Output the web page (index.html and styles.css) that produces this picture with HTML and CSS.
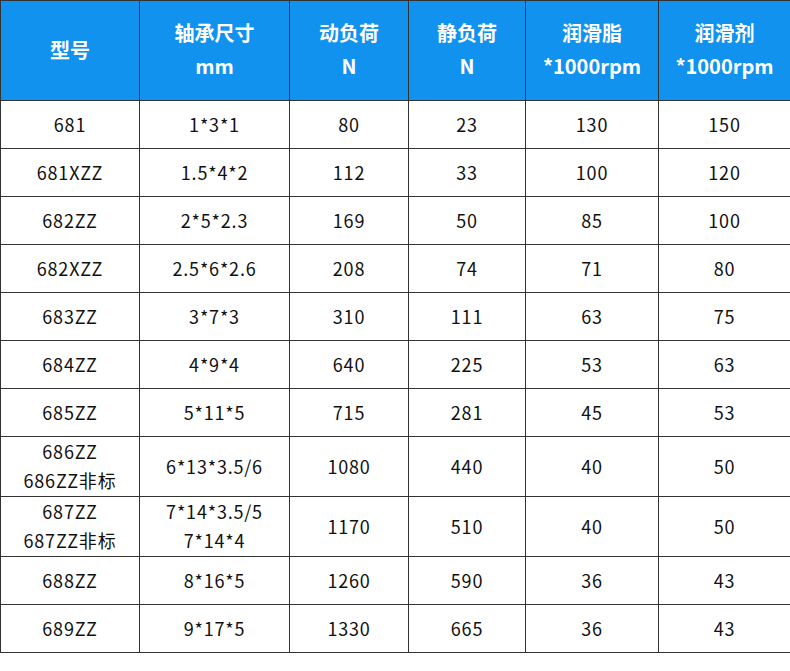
FILE: index.html
```html
<!DOCTYPE html>
<html lang="zh">
<head>
<meta charset="utf-8">
<link rel="stylesheet" href="styles.css">
</head>
<body>
<table class="spec">
  <colgroup>
    <col class="c1"><col class="c2"><col class="c3"><col class="c4"><col class="c5"><col class="c6">
  </colgroup>
  <thead>
    <tr>
      <th>型号</th>
      <th>轴承尺寸<br>mm</th>
      <th>动负荷<br>N</th>
      <th>静负荷<br>N</th>
      <th>润滑脂<br>*1000rpm</th>
      <th>润滑剂<br>*1000rpm</th>
    </tr>
  </thead>
  <tbody>
    <tr><td>681</td><td>1*3*1</td><td>80</td><td>23</td><td>130</td><td>150</td></tr>
    <tr><td>681XZZ</td><td>1.5*4*2</td><td>112</td><td>33</td><td>100</td><td>120</td></tr>
    <tr><td>682ZZ</td><td>2*5*2.3</td><td>169</td><td>50</td><td>85</td><td>100</td></tr>
    <tr><td>682XZZ</td><td>2.5*6*2.6</td><td>208</td><td>74</td><td>71</td><td>80</td></tr>
    <tr><td>683ZZ</td><td>3*7*3</td><td>310</td><td>111</td><td>63</td><td>75</td></tr>
    <tr><td>684ZZ</td><td>4*9*4</td><td>640</td><td>225</td><td>53</td><td>63</td></tr>
    <tr><td>685ZZ</td><td>5*11*5</td><td>715</td><td>281</td><td>45</td><td>53</td></tr>
    <tr class="tall"><td>686ZZ<br>686ZZ非标</td><td>6*13*3.5/6</td><td>1080</td><td>440</td><td>40</td><td>50</td></tr>
    <tr class="tall"><td>687ZZ<br>687ZZ非标</td><td>7*14*3.5/5<br>7*14*4</td><td>1170</td><td>510</td><td>40</td><td>50</td></tr>
    <tr><td>688ZZ</td><td>8*16*5</td><td>1260</td><td>590</td><td>36</td><td>43</td></tr>
    <tr><td>689ZZ</td><td>9*17*5</td><td>1330</td><td>665</td><td>36</td><td>43</td></tr>
  </tbody>
</table>
</body>
</html>
```
FILE: styles.css
```css
html, body {
  margin: 0;
  padding: 0;
  background: #ffffff;
}
.spec {
  width: 790px;
  border-collapse: collapse;
  table-layout: fixed;
  font-family: "Noto Sans CJK SC", "Noto Sans", sans-serif;
}
.c1 { width: 139px; }
.c2 { width: 150px; }
.c3 { width: 119px; }
.c4 { width: 117px; }
.c5 { width: 133px; }
.c6 { width: 132px; }
.spec th, .spec td {
  border: 1px solid #333333;
  text-align: center;
  vertical-align: middle;
  padding: 0;
}
.spec th {
  background: #1192ee;
  color: #ffffff;
  font-size: 20px;
  font-weight: 700;
  line-height: 33px;
  height: 100px;
  padding-bottom: 3px;
  box-sizing: border-box;
}
.spec td {
  color: #111111;
  font-size: 18px;
  letter-spacing: 0.8px;
  line-height: 29px;
  height: 48px;
  padding-bottom: 1px;
  box-sizing: border-box;
}
.spec tr.tall td {
  height: 60px;
}
```
